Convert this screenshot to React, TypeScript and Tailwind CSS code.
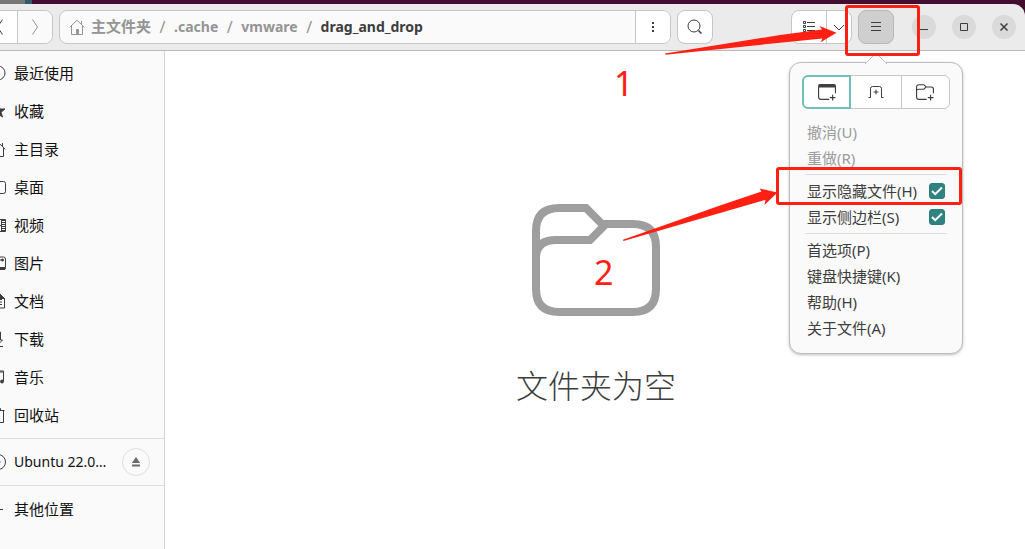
import type { ReactNode } from "react";

type IconProps = { children: ReactNode; className?: string };

function Icon({ children, className = "" }: IconProps) {
  return (
    <svg
      viewBox="0 0 16 16"
      className={`size-4 shrink-0 ${className}`}
      fill="none"
      stroke="currentColor"
      strokeWidth="1"
      aria-hidden="true"
    >
      {children}
    </svg>
  );
}

const house = (
  <>
    <path d="M.7 8.3 8 1.2l7.3 7.1M2.500 7v8.500h3M13.500 7v8.500h-3" />
    <path d="M12.500 2v3.500" />
    <path d="M7.500 14.500V10.500h2v4z" fill="currentColor" />
    <path d="M5 15.500h6" />
  </>
);

const places: { label: string; icon: ReactNode }[] = [
  { label: "最近使用", icon: <><circle cx="8" cy="8" r="7" /><path d="M8 4v4.500H5" /></> },
  { label: "收藏", icon: <path d="m8 1 2 5h5l-4 3.200L12.500 14 8 11l-4.500 3L5 9.200 1 6h5z" fill="currentColor" /> },
  { label: "主目录", icon: house },
  { label: "桌面", icon: <rect x="1" y="2.500" width="14.500" height="12" rx="2" /> },
  {
    label: "视频",
    icon: (
      <>
        <path d="M1 2.500h14.500v12H1zM4.500 2.500v12M11.500 2.500v12M4.500 8.500h7" />
        <path d="M13.500 3v12" strokeWidth="3" strokeDasharray="1 1" />
      </>
    ),
  },
  {
    label: "图片",
    icon: (
      <>
        <rect x="1" y="2" width="14.500" height="12.500" rx="2" />
        <path d="M2 12.500h13v2H2z" fill="currentColor" />
        <path d="M9 5h4" />
        <circle cx="12.500" cy="5" r="1" fill="currentColor" />
      </>
    ),
  },
  {
    label: "文档",
    icon: (
      <>
        <path d="M2.500 1h7.500l4.500 4.500v9.500h-12zM5 6.500h7M5 9h7M5 11.500h7" />
        <path d="M10 1v4.500h4.500z" fill="currentColor" />
      </>
    ),
  },
  { label: "下载", icon: <path d="M8.500 1h2v8h2l-4 4-4-4h2V1zM3 15.500h10" /> },
  {
    label: "音乐",
    icon: (
      <>
        <path d="M5.500 12.500V2h8v10.500M5.500 3h8" />
        <circle cx="4" cy="13" r="2" fill="currentColor" />
        <circle cx="12" cy="12.500" r="1.500" fill="currentColor" />
      </>
    ),
  },
  { label: "回收站", icon: <path d="M1.500 3.500h13M5.500 3V1.500h5V3M3 4v11.500h10.500V4" /> },
];

function PlaceRow({ label, icon, children }: { label: string; icon: ReactNode; children?: ReactNode }) {
  return (
    <li className="flex h-[38px] items-center pr-[14px]">
      <a href="#" className="-ml-[10px] flex min-w-0 flex-1 items-center gap-2 text-[#111]">
        <Icon className="text-[#3d3d3d]">{icon}</Icon>
        <span className="truncate">{label}</span>
      </a>
      {children}
    </li>
  );
}

function Sidebar() {
  return (
    <nav className="w-[165px] shrink-0 overflow-hidden border-r border-[#d5d5d5] bg-[#fafafa] pt-[3px]" aria-label="位置">
      <ul>
        {places.map((p) => (
          <PlaceRow key={p.label} {...p} />
        ))}
      </ul>
      <ul className="mt-1 border-y border-[#dedede] py-1 text-sm">
        <PlaceRow
          label="Ubuntu 22.0…"
          icon={<><circle cx="8" cy="8" r="7.500" /><circle cx="8" cy="8" r="2" fill="currentColor" /></>}
        >
          <button
            aria-label="弹出"
            className="flex size-7 shrink-0 items-center justify-center rounded-full border border-[#dedede] text-[#6c6c6c]"
          >
            <Icon>
              <path d="m8 3 4.200 6H3.800zM4 10.500h8v2H4z" fill="currentColor" stroke="none" />
            </Icon>
          </button>
        </PlaceRow>
      </ul>
      <ul className="pt-1">
        <PlaceRow label="其他位置" icon={<path d="M8 3v10M3 8.500h10" />} />
      </ul>
    </nav>
  );
}

function Separator() {
  return <hr className="-mx-0.5 my-[3px] h-px border-0 bg-[#dcdcdc]" />;
}

function MenuItem({ label, disabled = false }: { label: string; disabled?: boolean }) {
  return (
    <button disabled={disabled} className="block h-[26px] w-full text-left disabled:text-[#9c9c9c]">
      {label}
    </button>
  );
}

function MenuCheck({ label }: { label: string }) {
  return (
    <label className="flex h-[26px] items-center justify-between">
      <span>{label}</span>
      <span className="grid size-4">
        <input
          type="checkbox"
          defaultChecked
          className="peer col-start-1 row-start-1 size-4 appearance-none rounded-[3px] border border-[#2b7f7b] checked:bg-[#308280]"
        />
        <Icon className="pointer-events-none invisible col-start-1 row-start-1 text-white peer-checked:visible">
          <path d="m3 8 3.200 3.200L13 4.500" strokeWidth="2" />
        </Icon>
      </span>
    </label>
  );
}

function AppMenu() {
  return (
    <div className="absolute top-[52px] left-1/2 z-10 w-[174px] -translate-x-1/2 rounded-xl border border-[#bdbdbd] bg-[#fafafa] p-3 text-[#3d3d3d] shadow-[0_1px_3px_rgba(0,0,0,0.25)]">
      <svg
        viewBox="0 0 24 12"
        className="absolute -top-[11px] left-1/2 h-3 w-6 -translate-x-1/2"
        aria-hidden="true"
      >
        <path d="M1 12 12 1l11 11" fill="#fafafa" stroke="#bdbdbd" />
      </svg>
      <div className="grid h-[34px] grid-cols-3">
        <button aria-label="新建窗口" className="flex items-center justify-center rounded-l-md border-2 border-[#70bfba] bg-white">
          <Icon className="size-[18px]">
            <path d="M10 14.500H2.500a2 2 0 0 1-2-2v-9a2 2 0 0 1 2-2h11a2 2 0 0 1 2 2V9M13 10.500v5M10.500 13h5" />
            <path d="M1 1.500h14v2H1z" fill="currentColor" />
          </Icon>
        </button>
        <button aria-label="新建标签页" className="flex items-center justify-center border-y border-[#c6c6c6] bg-white">
          <Icon>
            <path d="M.5 13.500h2v-9a2 2 0 0 1 2-2h7a2 2 0 0 1 2 2v9h2M8 5.500v5M5.500 8h5" />
          </Icon>
        </button>
        <button aria-label="新建文件夹" className="flex items-center justify-center rounded-r-md border border-[#c6c6c6] bg-white">
          <Icon className="size-[18px]">
            <path d="M9.500 14.500h-7a2 2 0 0 1-2-2v-9a2 2 0 0 1 2-2H7l2 2h4.500a2 2 0 0 1 2 2V9M.5 6.500q0-1 2-1H7l2-2M13 10.500v5M10.500 13h5" />
          </Icon>
        </button>
      </div>
      <div className="mt-[10px] px-[5px]">
        <MenuItem label="撤消(U)" disabled />
        <MenuItem label="重做(R)" disabled />
        <Separator />
        <MenuCheck label="显示隐藏文件(H)" />
        <MenuCheck label="显示侧边栏(S)" />
        <Separator />
        <MenuItem label="首选项(P)" />
        <MenuItem label="键盘快捷键(K)" />
        <MenuItem label="帮助(H)" />
        <MenuItem label="关于文件(A)" />
      </div>
    </div>
  );
}

function Crumb({ children }: { children: ReactNode }) {
  return (
    <>
      <a href="#" className="flex items-center gap-1.5">{children}</a>
      <span className="w-[23px] text-center text-base font-normal">/</span>
    </>
  );
}

function WindowButton({ label, children }: { label: string; children: ReactNode }) {
  return (
    <button aria-label={label} className="flex size-6 items-center justify-center rounded-full bg-[#dadada] text-[#3d3d3d]">
      <Icon>{children}</Icon>
    </button>
  );
}

function HeaderBar() {
  return (
    <header className="flex h-[47px] items-center gap-1.5 rounded-tr-xl border-b border-[#bababa] bg-[#ebebeb] pr-[9px]">
      <div className="-ml-[18px] flex h-[34px] w-[71px] rounded-lg border border-[#c6c6c6] bg-white">
        <button aria-label="后退" className="flex flex-1 items-center justify-center border-r border-[#c6c6c6] text-[#3d3d3d]">
          <Icon><path d="M10.500 .5 5.500 8l5 7.500" /></Icon>
        </button>
        <button aria-label="前进" className="flex flex-1 items-center justify-center rounded-r-lg bg-[#fafafa] text-[#939393]">
          <Icon><path d="M5.500 .5 10.500 8l-5 7.500" /></Icon>
        </button>
      </div>

      <div className="flex h-[34px] min-w-0 flex-1 overflow-hidden rounded-lg border border-[#c6c6c6] bg-[#fafafa]">
        <div className="flex min-w-0 flex-1 items-center pl-[9px] text-sm font-bold whitespace-nowrap text-[#949494]">
          <Crumb>
            <Icon>{house}</Icon>
            <span className="text-[15px]">主文件夹</span>
          </Crumb>
          <Crumb>.cache</Crumb>
          <Crumb>vmware</Crumb>
          <a href="#" className="text-[#3d3d3d]">drag_and_drop</a>
        </div>
        <button aria-label="文件夹选项" className="flex w-[35px] items-center justify-center border-l border-[#c6c6c6] bg-white text-[#3d3d3d]">
          <Icon>
            <path d="M7 3h2v2H7zM7 7h2v2H7zM7 11h2v2H7z" fill="currentColor" stroke="none" />
          </Icon>
        </button>
      </div>

      <button aria-label="搜索" className="flex h-[34px] w-9 items-center justify-center rounded-lg border border-[#c6c6c6] bg-white text-[#3d3d3d]">
        <Icon><circle cx="7" cy="7" r="6" /><path d="m11.500 11.500 3 3" strokeWidth="1.500" /></Icon>
      </button>

      <div className="ml-[72px] flex h-[34px] w-[61px] rounded-lg border border-[#c6c6c6] bg-white text-[#3d3d3d]">
        <button aria-label="列表视图" className="flex w-[35px] items-center justify-center border-r border-[#c6c6c6]">
          <Icon>
            <path d="M2.500 2.500h2v2h-2zM2.500 6.500h2v2h-2zM2.500 10.500h2v2h-2zM6 3.500h8M6 7.500h8M6 11.500h8" />
          </Icon>
        </button>
        <button aria-label="视图选项" className="flex flex-1 items-center justify-center">
          <Icon><path d="m3 6 5 5 5-5" /></Icon>
        </button>
      </div>

      <div className="relative">
        <button aria-label="菜单" aria-expanded="true" className="flex h-[34px] w-9 items-center justify-center rounded-lg border border-[#b8b8b8] bg-[#cfcfcf] text-[#3d3d3d]">
          <Icon><path d="M3 3.500h10M3 7.500h10M3 11.500h10" /></Icon>
        </button>
        <AppMenu />
      </div>

      <div className="ml-3 flex gap-4">
        <WindowButton label="最小化"><path d="M4 10.500h8" /></WindowButton>
        <WindowButton label="最大化"><path d="M4.500 4.500h7v7h-7z" /></WindowButton>
        <WindowButton label="关闭"><path d="m4.500 4.500 7 7m0-7-7 7" strokeWidth="1.500" /></WindowButton>
      </div>
    </header>
  );
}

function EmptyFolder() {
  return (
    <main className="flex flex-1 flex-col items-center bg-white pt-[153px] pl-0.5">
      <svg viewBox="0 0 128 112" className="h-28 w-32" fill="none" stroke="#9e9e9e" strokeWidth="8" aria-hidden="true">
        <path d="M4 56V27Q4 4 27 4H54L70 20H101Q124 20 124 43V85Q124 108 101 108H27Q4 108 4 85V54Q4 36 24 36H58L74 20" />
      </svg>
      <h1 className="mt-[46px] text-[32px] leading-12 font-light text-[#3d3d3d]">文件夹为空</h1>
    </main>
  );
}

function Annotations() {
  return (
    <div className="pointer-events-none absolute top-0 right-0 z-20 h-[549px] w-[1025px] text-[34px] leading-10 text-[#ff2013]">
      <svg viewBox="0 0 1025 549" className="absolute inset-0 size-full" fill="currentColor" aria-hidden="true">
        <path d="M665 53.500 780 35 822 29.500 819.500 26 836.500 32.700 820.700 42.300 822.500 38.500 780 42.700 665.500 54.800Z" />
        <path d="M623 239.700 720 205.500 761.500 191.500 759.500 188.500 777.500 192.400 764.500 205 765.500 199.700 720 213 623.500 241Z" />
      </svg>
      <div className="absolute top-[5px] left-[845px] h-[51px] w-[75px] rounded-[3px] border-3 border-current" />
      <div className="absolute top-[167px] left-[776px] h-[38px] w-[186px] rounded-[3px] border-3 border-current" />
      <span className="absolute top-[63px] left-[614px]">1</span>
      <span className="absolute top-[252px] left-[594px]">2</span>
    </div>
  );
}

export default function App() {
  return (
    <div className="relative flex min-h-screen flex-col overflow-hidden bg-white font-['Noto_Sans','Noto_Sans_CJK_SC',sans-serif] text-[15px] leading-[26px]">
      <div className="relative bg-[#420d2e] pt-1">
        <div className="absolute top-0 left-0 h-1 w-8 border-r-7 border-[#35596a] bg-[#777]" />
        <HeaderBar />
      </div>
      <div className="flex flex-1">
        <Sidebar />
        <EmptyFolder />
      </div>
      <Annotations />
    </div>
  );
}
